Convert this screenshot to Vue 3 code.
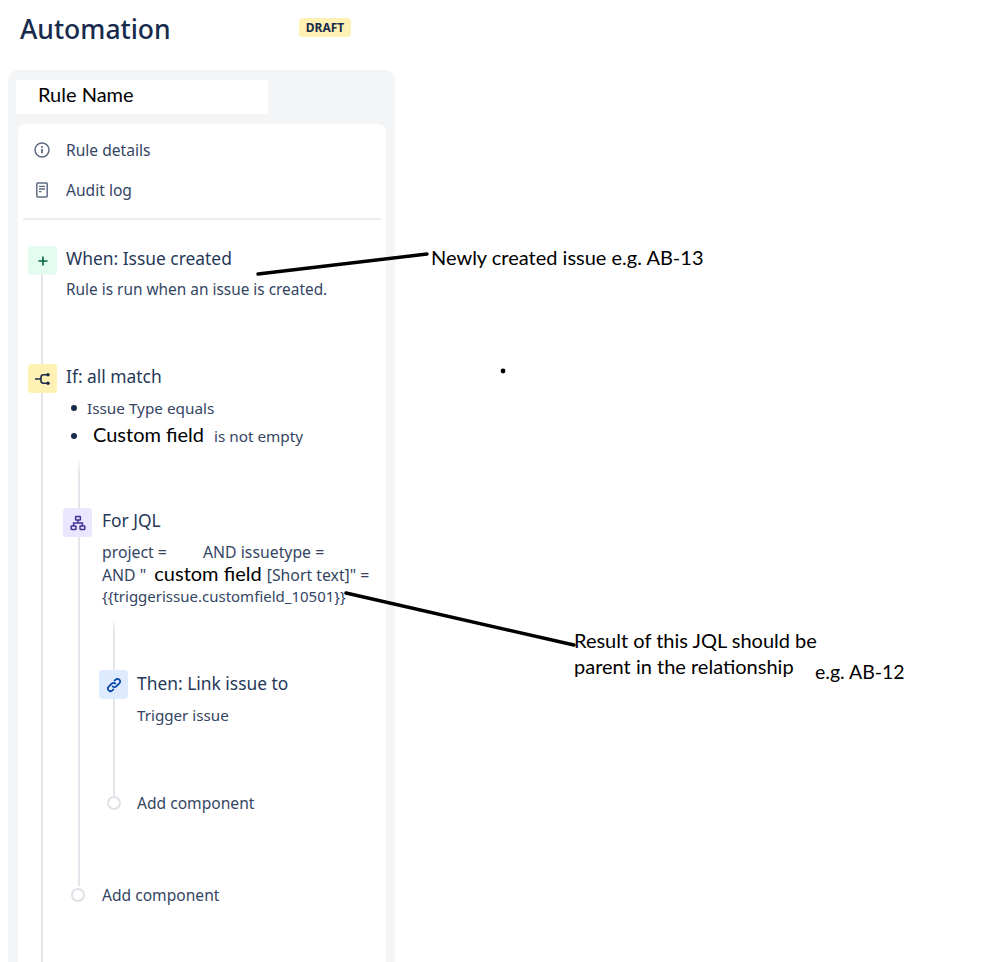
<script setup>
const ruleItems = [
  { label: 'Rule details', icon: 'info' },
  { label: 'Audit log', icon: 'log' },
]
const jqlValue = '{' + '{triggerissue.customfield_10501}' + '}'
</script>

<template>
  <div class="page">
    <header class="head">
      <h1 class="title">Automation</h1>
      <span class="badge">DRAFT</span>
    </header>

    <section class="panel">
      <div class="name-field">Rule Name</div>
      <div class="card">
        <nav class="nav">
          <div v-for="item in ruleItems" :key="item.label" class="nav-row">
            <svg v-if="item.icon === 'info'" class="nav-icon" viewBox="0 0 16 16" fill="none">
              <circle cx="8" cy="8" r="7" stroke="#5e6c84" stroke-width="1.5" />
              <rect x="7.1" y="7" width="1.8" height="4.4" rx=".6" fill="#5e6c84" />
              <circle cx="8" cy="5" r="1.1" fill="#5e6c84" />
            </svg>
            <svg v-else class="nav-icon" viewBox="0 0 16 16" fill="none">
              <rect x="2.8" y="1" width="10.4" height="14" rx="1" stroke="#5e6c84" stroke-width="1.5" />
              <path d="M5 4.4h6M5 7h6M5 9.6h2.6" stroke="#5e6c84" stroke-width="1.4" />
            </svg>
            <span>{{ item.label }}</span>
          </div>
        </nav>
        <div class="divider"></div>

        <div class="flow">
          <div class="rail rail-outer"></div>

          <div class="step step-when">
            <div class="tile tile-green">
              <svg viewBox="0 0 14 14" width="14" height="14" fill="none">
                <path d="M7 2.5v9M2.5 7h9" stroke="#006644" stroke-width="1.6" />
              </svg>
            </div>
            <div class="step-body">
              <div class="step-title">When: Issue created</div>
              <div class="step-desc">Rule is run when an issue is created.</div>
            </div>
          </div>

          <div class="step step-if">
            <div class="tile tile-yellow">
              <svg viewBox="0 0 18 14" width="18" height="14" fill="none">
                <path d="M1 7h6M13 2.8H9.6Q7 2.8 7 5.2v3.6q0 2.4 2.6 2.4H13" stroke="#172b4d" stroke-width="1.6" />
                <circle cx="14" cy="2.8" r="1.7" fill="#172b4d" />
                <circle cx="14" cy="11.2" r="1.7" fill="#172b4d" />
              </svg>
            </div>
            <div class="step-body">
              <div class="step-title">If: all match</div>
            </div>
          </div>
          <ul class="conds">
            <li>Issue Type equals</li>
            <li><span class="redact redact-field">Custom field</span> is not empty</li>
          </ul>

          <div class="nest nest-jql">
            <div class="rail rail-jql"></div>
            <div class="step step-wide">
              <div class="tile tile-purple">
                <svg viewBox="0 0 16 16" width="16" height="16" fill="none" stroke="#403294" stroke-width="1.5">
                  <rect x="5.6" y="1.6" width="4.8" height="3.4" rx=".6" />
                  <rect x="1.2" y="11" width="4.8" height="3.4" rx=".6" />
                  <rect x="10" y="11" width="4.8" height="3.4" rx=".6" />
                  <path d="M8 5v3M3.6 11V8h8.8v3" />
                </svg>
              </div>
              <div class="step-body">
                <div class="step-title">For JQL</div>
                <div class="jql">
                  <div>project = <span class="gap"></span>AND issuetype =</div>
                  <div>AND " <span class="redact redact-inline">custom field</span> [Short text]" =</div>
                  <div class="jql-code">{{ jqlValue }}</div>
                </div>
              </div>
            </div>

            <div class="nest nest-then">
              <div class="rail rail-then"></div>
              <div class="step">
                <div class="tile tile-blue">
                  <svg viewBox="0 0 16 16" width="16" height="16" fill="none" stroke="#0747a6" stroke-width="1.7" stroke-linecap="round">
                    <path d="M6.6 9.4a2.6 2.6 0 0 0 3.7 0l3-3a2.6 2.6 0 0 0-3.7-3.7l-1 1" />
                    <path d="M9.4 6.6a2.6 2.6 0 0 0-3.7 0l-3 3a2.6 2.6 0 0 0 3.7 3.7l1-1" />
                  </svg>
                </div>
                <div class="step-body">
                  <div class="step-title step-title-low">Then: Link issue to</div>
                  <div class="then-desc">Trigger issue</div>
                </div>
              </div>
              <div class="add add-inner"><span class="dot"></span><span>Add component</span></div>
            </div>

            <div class="add add-outer"><span class="dot"></span><span>Add component</span></div>
          </div>
        </div>
      </div>
    </section>

    <svg class="strokes" width="999" height="962" viewBox="0 0 999 962" fill="none">
      <path d="M258 274L427 254" stroke="#000" stroke-width="3.4" stroke-linecap="round" />
      <path d="M346 593L574 645" stroke="#000" stroke-width="3.4" stroke-linecap="round" />
      <circle cx="503" cy="371" r="2.4" fill="#000" />
    </svg>
    <div class="note note-new">Newly created issue e.g. AB-13</div>
    <div class="note note-result">Result of this JQL should be<br />parent in the relationship</div>
    <div class="note note-eg">e.g. AB-12</div>
  </div>
</template>

<style scoped>
.page {
  position: relative;
  width: 999px;
  height: 962px;
  overflow: hidden;
  background: #fff;
  font-family: "Noto Sans", "Open Sans", sans-serif;
  color: #344563;
}
.head {
  display: flex;
  align-items: flex-start;
  height: 70px;
  padding-left: 20px;
  box-sizing: border-box;
}
.title {
  margin: 9px 0 0;
  width: 279px;
  font-size: 26.5px;
  line-height: 40px;
  font-weight: 500;
  color: #172b4d;
}
.badge {
  margin-top: 18px;
  height: 19px;
  width: 52px;
  border-radius: 4px;
  background: #fff0b3;
  color: #172b4d;
  font-size: 12px;
  line-height: 19px;
  font-weight: 700;
  text-align: center;
}
.panel {
  margin-left: 8px;
  width: 387px;
  height: 892px;
  box-sizing: border-box;
  padding: 10px 9px 0 8px;
  border-radius: 10px 10px 0 0;
  background: #f4f5f7;
}
.name-field {
  width: 252px;
  height: 34px;
  box-sizing: border-box;
  padding-left: 22px;
  background: #fff;
  color: #000;
  font-family: Lato, sans-serif;
  font-size: 20px;
  line-height: 28px;
}
.card {
  margin: 10px 0 0 2px;
  height: 838px;
  padding: 0 5px;
  border-radius: 8px 8px 0 0;
  background: #fff;
  overflow: hidden;
}
.nav {
  padding: 6px 0 8px 11px;
}
.nav-row {
  display: flex;
  align-items: center;
  height: 40px;
  font-size: 15.6px;
}
.nav-icon {
  width: 16px;
  height: 16px;
  margin-right: 16px;
}
.divider {
  height: 2px;
  background: #ebecf0;
}
.flow {
  position: relative;
  padding: 26px 0 0 5px;
}
.rail {
  position: absolute;
  width: 2px;
  background: #e4e5ea;
}
.rail-outer {
  left: 18px;
  top: 54px;
  height: 800px;
}
.step {
  display: flex;
  gap: 9px;
}
.step-wide {
  gap: 10px;
}
.step-when {
  height: 118px;
}
.tile {
  position: relative;
  z-index: 1;
  flex: none;
  display: flex;
  align-items: center;
  justify-content: center;
  width: 29px;
  height: 29px;
  border-radius: 4px;
}
.tile-green { background: #e3fcef; }
.tile-yellow { background: #fff0b3; }
.tile-purple { background: #eae6ff; }
.tile-blue { background: #deebff; }
.step-title {
  font-size: 17.4px;
  line-height: 24px;
  color: #253858;
}
.step-title-low {
  margin-top: 1px;
}
.step-desc {
  margin-top: 9px;
  font-size: 15.4px;
  line-height: 22px;
}
.conds {
  margin: 1px 0 0;
  padding: 0 0 0 59px;
  color: #344563;
  list-style: none;
  font-size: 15.3px;
}
.conds li {
  position: relative;
  height: 28px;
  line-height: 28px;
}
.conds li::before {
  content: "";
  position: absolute;
  left: -16px;
  top: 11px;
  width: 6px;
  height: 6px;
  border-radius: 50%;
  background: #172b4d;
}
.redact {
  color: #000;
  font-family: Lato, sans-serif;
  font-size: 20px;
  line-height: 1;
}
.redact-field {
  margin-right: 6px;
  margin-left: 6px;
}
.nest {
  position: relative;
}
.nest-jql {
  margin: 58px 0 0 35px;
}
.rail-jql {
  left: 15px;
  top: -48px;
  height: 426px;
  background: linear-gradient(rgba(228, 229, 234, 0.2), #e4e5ea 14px);
}
.jql {
  margin-top: 9px;
  width: 290px;
  font-size: 15.8px;
  line-height: 22px;
}
.jql > div {
  height: 22px;
  white-space: nowrap;
}
.jql .jql-code {
  font-size: 15px;
}
.gap {
  display: inline-block;
  width: 32px;
}
.redact-inline {
  margin: 0 1px 0 4px;
}
.nest-then {
  margin: 63px 0 0 36px;
}
.rail-then {
  left: 14px;
  top: -50px;
  height: 176px;
  background: linear-gradient(rgba(228, 229, 234, 0.2), #e4e5ea 14px);
}
.then-desc {
  margin-top: 9px;
  font-size: 15.2px;
  line-height: 22px;
}
.add {
  position: relative;
  z-index: 1;
  display: flex;
  align-items: center;
  gap: 16px;
  font-size: 15.6px;
  line-height: 24px;
}
.add-inner {
  margin: 65px 0 0 8px;
}
.add-outer {
  margin: 68px 0 0 8px;
  gap: 17px;
}
.dot {
  width: 14px;
  height: 14px;
  box-sizing: border-box;
  border: 2.5px solid #dfe1e6;
  border-radius: 50%;
  background: #fff;
}
.strokes {
  position: absolute;
  left: 0;
  top: 0;
  z-index: 2;
  pointer-events: none;
}
.note {
  position: absolute;
  z-index: 3;
  color: #000;
  font-family: Lato, sans-serif;
  font-size: 20px;
  line-height: 26px;
  white-space: nowrap;
}
.note-new { left: 431px; top: 244px; }
.note-result { left: 574px; top: 627px; }
.note-eg { left: 815px; top: 659px; font-size: 19.5px; }
</style>
